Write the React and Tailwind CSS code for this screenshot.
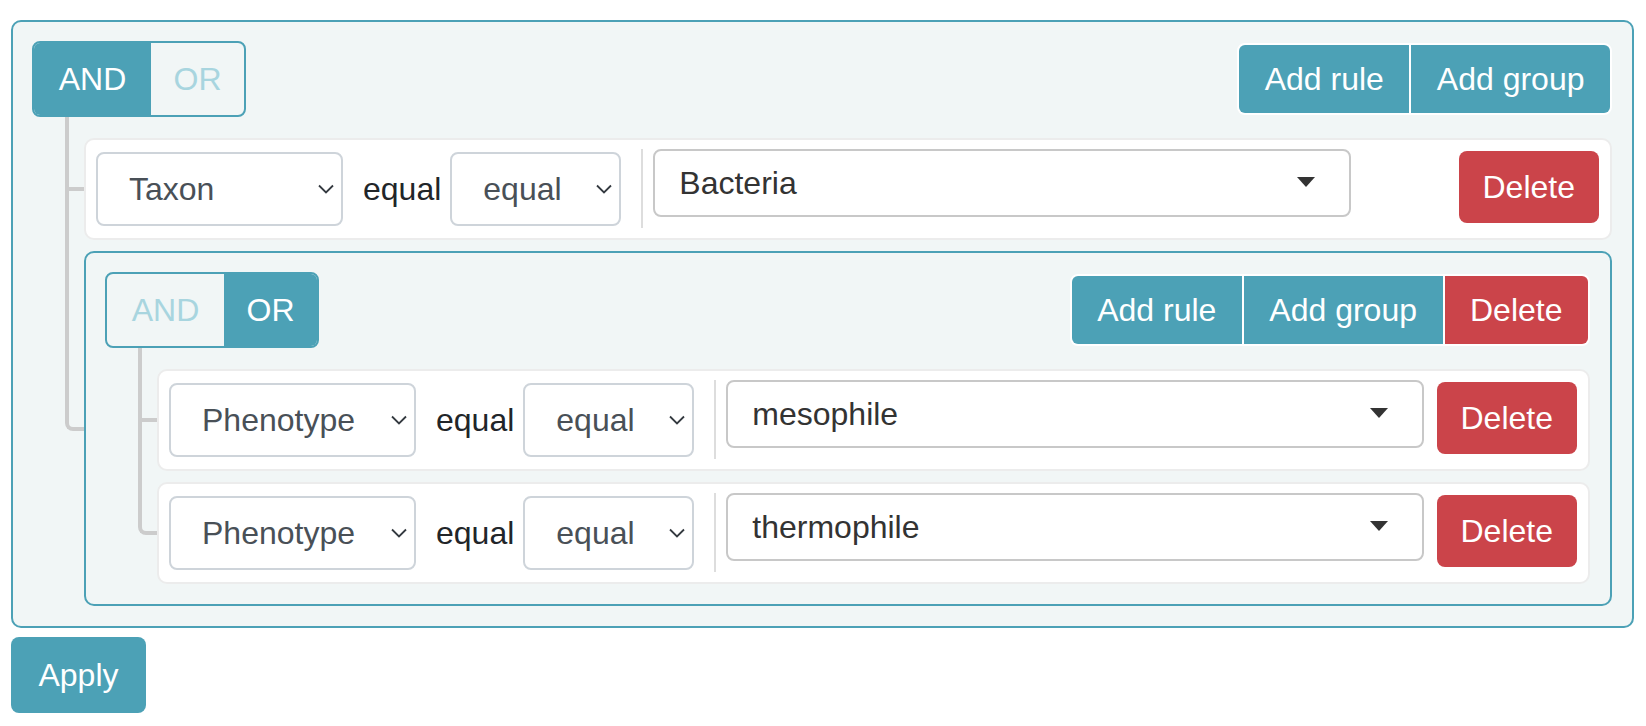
import React from 'react'

// query builder: nested groups of rules with AND/OR switches

function Conjunction({ value }) {
  const on = 'bg-[#4ca1b6] text-white'
  const off = 'text-[#a8d5df]'
  return (
    <div className="flex h-[76px] border-2 border-[#4ca1b6] rounded-[8px] overflow-hidden">
      <button className={`w-[117px] ${value === 'AND' ? on : off}`}>AND</button>
      <button className={`w-[93px] ${value === 'OR' ? on : off}`}>OR</button>
    </div>
  )
}

function Chevron() {
  return (
    <svg className="ml-auto mr-[7px]" width="16" height="10" viewBox="0 0 16 10">
      <path d="M1 1.5l7 7 7-7" fill="none" stroke="#343a40" strokeWidth="1.8" />
    </svg>
  )
}

function Select({ value, className }) {
  return (
    <div className={`mt-[3px] h-[74px] flex items-center pl-[31px] bg-white border-2 border-[#ced4da] rounded-[8px] text-[#495057] ${className}`}>
      <span>{value}</span>
      <Chevron />
    </div>
  )
}

function ValueBox({ value }) {
  return (
    <div className="ml-[10px] w-[698px] h-[68px] flex items-center pl-[24px] pr-[34px] bg-white border-2 border-[#c8c8c8] rounded-[8px] text-[#333333]">
      <span>{value}</span>
      <svg className="ml-auto -mt-[2px]" width="18" height="10" viewBox="0 0 18 10">
        <path d="M0 0h18L9 10z" fill="#333333" />
      </svg>
    </div>
  )
}

function Rule({ field, value }) {
  return (
    <div className="flex items-start bg-white border-2 border-[#ececec] rounded-[10px] pl-[10px] pr-[11px] pt-[9px] pb-[10px]">
      <Select value={field} className="w-[247px]" />
      <span className="self-center ml-[20px]">equal</span>
      <Select value="equal" className="ml-[9px] w-[171px]" />
      <div className="ml-[20px] w-[2px] h-[79px] bg-[#dddddd]" />
      <ValueBox value={value} />
      <button className="ml-auto mt-[2px] h-[72px] px-[24px] rounded-[8px] bg-[#cb444a] text-white">Delete</button>
    </div>
  )
}

function Branch({ last, children }) {
  return (
    <div className="relative">
      <span className={`absolute left-[-19px] top-[-21px] w-[19px] h-[calc(50%+23px)] border-l-4 border-b-4 border-[#cccccc] ${last ? 'rounded-bl-[8px]' : ''}`} />
      {!last && <span className="absolute left-[-19px] top-1/2 h-[calc(50%+12px)] border-l-4 border-[#cccccc]" />}
      {children}
    </div>
  )
}

function Group({ conj, canDelete, items }) {
  return (
    <div className="border-2 border-[#4ca1b6] bg-[#f1f6f6] rounded-[10px] pt-[19px] pb-[20px] pl-[19px] pr-[20px]">
      <div className="flex items-start justify-between">
        <Conjunction value={conj} />
        <div className="mt-[2px] flex h-[72px] gap-[2px] bg-white border-2 border-white rounded-[8px] overflow-hidden">
          <button className="px-[25.5px] bg-[#4ca1b6] text-white">Add rule</button>
          <button className="px-[25.5px] bg-[#4ca1b6] text-white">Add group</button>
          {canDelete && <button className="px-[25.5px] bg-[#cb444a] text-white">Delete</button>}
        </div>
      </div>
      <div className="mt-[21px] pl-[52px] flex flex-col gap-[11px]">
        {items.map((it, i) => (
          <Branch key={i} last={i === items.length - 1}>{it}</Branch>
        ))}
      </div>
    </div>
  )
}

export default function App() {
  return (
    <div className="min-h-screen bg-white pt-[20px] pl-[11px] pr-[12px] font-['Liberation_Sans',Arial,sans-serif] text-[32px] leading-[1.5] text-[#212529]">
      <Group
        conj="AND"
        items={[
          <Rule field="Taxon" value="Bacteria" />,
          <Group
            conj="OR"
            canDelete
            items={[
              <Rule field="Phenotype" value="mesophile" />,
              <Rule field="Phenotype" value="thermophile" />,
            ]}
          />,
        ]}
      />
      <button className="mt-[9px] w-[135px] h-[76px] rounded-[8px] bg-[#4ca1b6] text-white">Apply</button>
    </div>
  )
}
